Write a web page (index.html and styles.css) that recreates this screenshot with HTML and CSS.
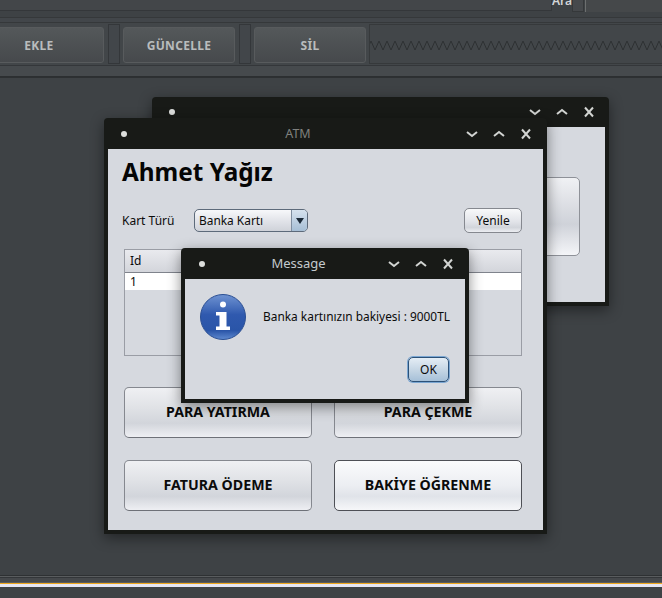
FILE: index.html
```html
<!DOCTYPE html>
<html lang="tr">
<head>
<meta charset="utf-8">
<title>ATM</title>
<link rel="stylesheet" href="styles.css">
</head>
<body>
<div class="page">
  <header class="top">
    <div class="strip">
      <div class="strip-fill"></div>
      <span class="ara">Ara</span>
      <div class="strip-box"></div>
      <div class="search"></div>
    </div>
    <div class="strip-gap"></div>
    <div class="toolbar">
      <button class="tool tool-first">EKLE</button>
      <div class="sep"></div>
      <button class="tool">GÜNCELLE</button>
      <div class="sep"></div>
      <button class="tool">SİL</button>
      <div class="zig">
        <svg class="zig-svg" width="300" height="40" aria-hidden="true">
          <defs>
            <pattern id="zz" x="1" y="0" width="8" height="40" patternUnits="userSpaceOnUse">
              <path d="M0 16 L4 25 L8 16" fill="none" stroke="#2c2f31" stroke-width="1"/>
            </pattern>
          </defs>
          <rect width="300" height="40" fill="url(#zz)"/>
        </svg>
      </div>
    </div>
    <div class="under"></div>
  </header>

  <main class="desktop">
    <section class="window win-back">
      <div class="titlebar">
        <span class="dot"></span>
        <span class="title"></span>
        <div class="controls">
          <svg class="ctl" viewBox="0 0 14 14"><path d="M2 5l5 4 5-4"/></svg>
          <svg class="ctl" viewBox="0 0 14 14"><path d="M2 9l5-4 5 4"/></svg>
          <svg class="ctl" viewBox="0 0 14 14"><path d="M3 2.5l8 9M11 2.5l-8 9"/></svg>
        </div>
      </div>
      <div class="body back-body">
        <div class="back-button"></div>
      </div>
    </section>

    <section class="window win-atm">
      <div class="titlebar">
        <span class="dot"></span>
        <span class="title title-dim">ATM</span>
        <div class="controls">
          <svg class="ctl" viewBox="0 0 14 14"><path d="M2 5l5 4 5-4"/></svg>
          <svg class="ctl" viewBox="0 0 14 14"><path d="M2 9l5-4 5 4"/></svg>
          <svg class="ctl" viewBox="0 0 14 14"><path d="M3 2.5l8 9M11 2.5l-8 9"/></svg>
        </div>
      </div>
      <div class="body atm-body">
        <h1 class="name">Ahmet Yağız</h1>
        <div class="card-row">
          <label class="card-label">Kart Türü</label>
          <div class="combo">
            <span class="combo-text">Banka Kartı</span>
            <span class="combo-arrow"><svg width="8" height="6" viewBox="0 0 8 6"><path d="M0 0h8L4 6z" fill="#1c2a38"/></svg></span>
          </div>
          <button class="btn-small">Yenile</button>
        </div>
        <div class="table">
          <div class="thead"><span class="th">Id</span></div>
          <div class="row"><span class="td">1</span></div>
        </div>
        <div class="actions">
          <button class="action">PARA YATIRMA</button>
          <button class="action">PARA ÇEKME</button>
          <button class="action">FATURA ÖDEME</button>
          <button class="action action-hot">BAKİYE ÖĞRENME</button>
        </div>
      </div>
    </section>

    <section class="window win-msg">
      <div class="titlebar">
        <span class="dot"></span>
        <span class="title title-light">Message</span>
        <div class="controls">
          <svg class="ctl" viewBox="0 0 14 14"><path d="M2 5l5 4 5-4"/></svg>
          <svg class="ctl" viewBox="0 0 14 14"><path d="M2 9l5-4 5 4"/></svg>
          <svg class="ctl" viewBox="0 0 14 14"><path d="M3 2.5l8 9M11 2.5l-8 9"/></svg>
        </div>
      </div>
      <div class="body msg-body">
        <div class="msg-main">
          <svg class="info" width="46" height="46" viewBox="0 0 46 46" aria-hidden="true">
            <defs>
              <linearGradient id="blue" x1="0" y1="0" x2="0" y2="1">
                <stop offset="0" stop-color="#6f93d2"/>
                <stop offset=".45" stop-color="#2f59ae"/>
                <stop offset=".8" stop-color="#2a55a8"/>
                <stop offset="1" stop-color="#5f8ad0"/>
              </linearGradient>
            </defs>
            <circle cx="23" cy="23" r="22.5" fill="url(#blue)" stroke="#2b4f93"/>
            <circle cx="23" cy="10.5" r="3" fill="#fff"/>
            <path d="M16 18h10.500v14.500H30V36H16v-3.500h3.500V21.500H16z" fill="#fff"/>
          </svg>
          <p class="msg-text">Banka kartınızın bakiyesi : 9000TL</p>
        </div>
        <div class="msg-foot"><button class="ok">OK</button></div>
      </div>
    </section>
  </main>

  <footer class="bottom">
    <div class="b-line1"></div>
    <div class="b-line2"></div>
    <div class="b-orange"></div>
    <div class="b-white"></div>
    <div class="b-end"></div>
  </footer>
</div>
</body>
</html>
```

FILE: styles.css
```css
* { box-sizing: border-box; }
html, body { margin: 0; padding: 0; }
body {
  width: 662px;
  height: 598px;
  overflow: hidden;
  background: #3e4245;
  font-family: "Noto Sans", "Open Sans", sans-serif;
  font-size: 12px;
  color: #0b0b0b;
}
button { font-family: inherit; padding: 0; cursor: default; }
.page { display: flex; flex-direction: column; width: 662px; height: 598px; }

/* top application chrome */
.top { flex: none; height: 78px; border-bottom: 1px solid #2d3032; }
.strip { display: flex; height: 12px; overflow: hidden; }
.strip-fill { width: 552px; height: 11px; border-bottom: 1px solid #34373a; border-right: 1px solid #34373a; background: #434649; flex: none; }
.ara { flex: none; width: 20px; margin-top: -8px; height: 17px; font-size: 12px; line-height: 17px; color: #d3d6d8; font-weight: 600; text-align: center; }
.strip-box { flex: none; width: 12px; height: 12px; background: #46494c; border: 1px solid #35383a; border-top: 0; }
.search { flex: none; width: 77px; height: 13px; margin-left: 1px; border: 1px solid #6c6f6f; border-top: 0; border-right: 0; background: #45484a; }
.strip-gap { height: 5px; margin-top: 5px; border-top: 1px solid #35383a; background: #42464a; }
.toolbar {
  display: flex;
  align-items: center;
  height: 44px;
  background: #424649;
  border-top: 1px solid #35383a;
  border-bottom: 1px solid #34373a;
  overflow: hidden;
}
.tool {
  flex: none;
  width: 112px;
  height: 36px;
  margin-top: 2px;
  border: 1px solid #585b5d;
  border-radius: 3px;
  background: linear-gradient(#54585a, #46494c);
  color: #b9bcbd;
  font-weight: 700;
  font-size: 12px;
  letter-spacing: .3px;
}
.tool-first { width: 130px; margin-left: -26px; }
.sep { flex: none; width: 12px; height: 40px; margin: 0 3.500px; background: #42464a; border: 1px solid #34373a; }
.zig { flex: 1; height: 40px; margin-left: 3px; border: 1px solid #36393b; border-right: 0; overflow: hidden; }
.zig-svg { display: block; }
.under { height: 11px; background: #464a4d; border-bottom: 1px solid #2c2f31; }

/* desktop and its windows */
.desktop { flex: 1; position: relative; min-height: 0; }
.window {
  position: absolute;
  display: flex;
  flex-direction: column;
  background: #181a17;
  border-radius: 4px 4px 0 0;
  padding: 0 4px 4px;
  box-shadow: 0 4px 14px rgba(0, 0, 0, .45);
}
.win-back { left: 152px; top: 19px; width: 457px; height: 209px; }
.win-atm { left: 104px; top: 40px; width: 443px; height: 416px; }
.win-msg { left: 181px; top: 170px; width: 288px; height: 155px; }
.win-back .titlebar { height: 30px; }
.titlebar { flex: none; display: flex; align-items: center; height: 31px; }
.dot { width: 6px; height: 6px; margin-left: 13px; border-radius: 50%; background: #dcdedc; }
.win-msg .dot { margin-left: 14px; }
.title { flex: 1; text-align: center; font-size: 12.500px; }
.title-dim { color: #7f817e; padding-left: 4px; }
.title-light { color: #c4cace; font-size: 13px; padding-left: 5px; padding-bottom: 1px; }
.controls { display: flex; gap: 13px; margin-right: 10px; }
.win-back .controls { margin-right: 9px; }
.ctl { width: 14px; height: 14px; fill: none; stroke: #d2d4d2; stroke-width: 2; }
.body { flex: 1; background: #d6d9df; min-height: 0; }

.back-body { display: flex; justify-content: flex-end; padding: 50px 25px 0 0; }
.back-button {
  width: 300px;
  height: 79px;
  border: 1px solid #8e9198;
  border-radius: 5px;
  background: linear-gradient(#f0f1f4 0%, #dfe1e6 30%, #cfd2d9 60%, #f4f5f8 100%);
}

.atm-body { padding: 0 21px 0 14px; display: flex; flex-direction: column; }
.name { margin: 6px 0 0; font-size: 24.300px; line-height: 33px; font-weight: 700; color: #050505; }
.card-row { display: flex; align-items: center; height: 25px; margin-top: 20px; }
.card-label { width: 72px; font-size: 12px; }
.combo {
  display: flex;
  width: 114px;
  height: 23px;
  border: 1px solid #5d6a7a;
  border-radius: 5px;
  overflow: hidden;
  background: linear-gradient(#f7f8fa, #e0e2e8 55%, #cfd2d9);
}
.combo-text { flex: 1; padding-left: 4px; line-height: 21px; font-size: 11.900px; }
.combo-arrow {
  flex: none;
  display: flex;
  align-items: center;
  justify-content: center;
  width: 16px;
  border-left: 1px solid #7f8ea0;
  background: linear-gradient(#d6e2ee, #a6bed5);
}
.btn-small {
  margin-left: auto;
  width: 58px;
  height: 25px;
  font-size: 12px;
  color: #0b0b0b;
  border: 1px solid #85888f;
  border-radius: 5px;
  background: linear-gradient(#f8f9fa, #e2e4e9 55%, #d2d5db 80%, #eceef2);
}

.table { height: 107px; margin: 16px 0 0 2px; border: 1px solid #9a9da5; }
.thead {
  height: 23px;
  padding-left: 5px;
  line-height: 21px;
  border-bottom: 1px solid #7f838c;
  background: linear-gradient(#e9eaee, #d3d5db);
}
.th, .td { font-size: 12px; }
.row { height: 17px; padding-left: 5px; line-height: 17px; background: #fff; }

.actions {
  display: grid;
  grid-template-columns: 188px 188px;
  grid-auto-rows: 51px;
  gap: 22px;
  margin: 31px 0 0 2px;
}
.action {
  border: 1px solid #85888f;
  border-bottom-color: #6e7178;
  border-radius: 5px;
  font-size: 14.200px;
  font-weight: 700;
  line-height: 1;
  color: #0b0b0b;
  background: linear-gradient(#eff0f3 0%, #e0e2e6 40%, #d2d5db 72%, #eeeff3 100%);
}
.action-hot {
  border-color: #4e5056;
  background: linear-gradient(#fafbfc 0%, #eceef2 50%, #e0e3e9 72%, #f6f7f9 100%);
}

.msg-body { display: flex; flex-direction: column; padding: 15px 16px 0 15px; }
.msg-main { display: flex; align-items: center; gap: 17px; height: 46px; }
.info { flex: none; }
.msg-text { margin: 0; padding-bottom: 2px; font-size: 11.900px; white-space: nowrap; }
.msg-foot { display: flex; justify-content: flex-end; margin-top: 17px; }
.ok {
  width: 41px;
  height: 25px;
  font-size: 12px;
  color: #0b0b0b;
  border: 1px solid #2c5178;
  border-radius: 5px;
  background: linear-gradient(#e4edf5, #c0d2e2 60%, #a6c0d8);
  box-shadow: 0 0 0 1px #7aa6d2;
}

/* bottom stripes */
.bottom { flex: none; height: 23px; display: flex; flex-direction: column; }
.b-line1 { height: 3px; background: #595c5e; border-top: 1px solid #2e3133; border-bottom: 1px solid #333639; }
.b-line2 { height: 5px; background: #45484b; border-bottom: 1px solid #595c5e; }
.b-orange { height: 1px; background: #f0a81e; }
.b-white { height: 3px; background: #e6e6f2; }
.b-end { flex: 1; background: #3e4245; }
```
